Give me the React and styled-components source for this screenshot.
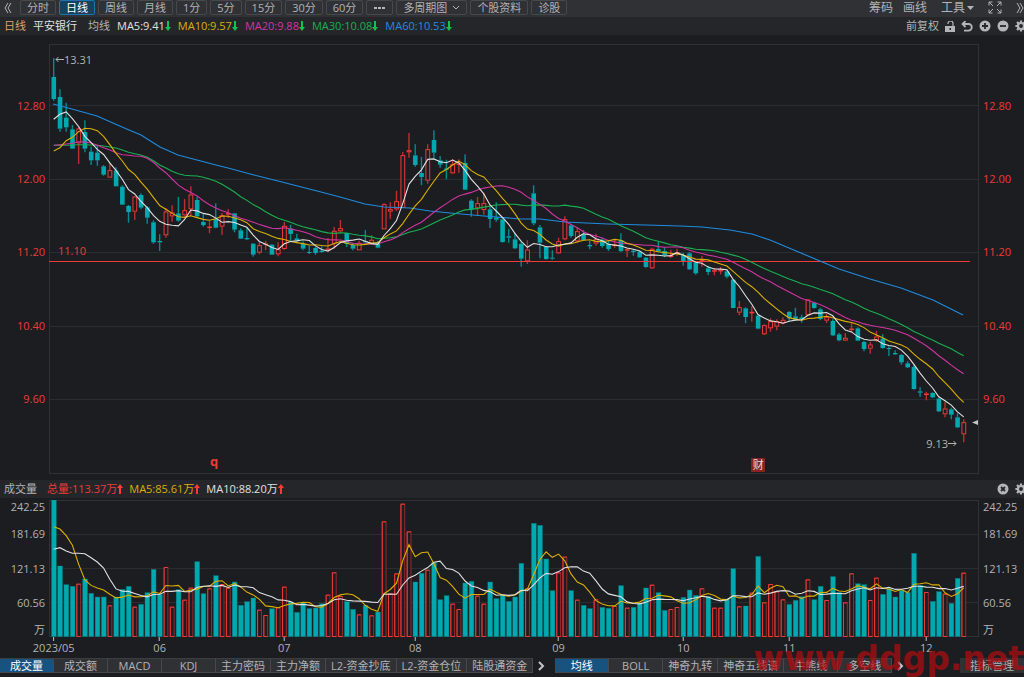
import styled, {createGlobalStyle, css} from "styled-components";

const colors = {
    bg: '#1c1d20',
    bar: '#25262a',
    tool: '#303135',
    line: '#303135',
    text: '#b2b3b5',
    up: '#ee3a38',
    upDim: '#97292b',
    down: '#00a8b0',
    downDim: '#04777d',
    white: '#e0e0e0',
    yellow: '#dcb000',
    pink: '#d034a2',
    green: '#18b050',
    blue: '#1e8ce0',
};

// side high top bottom low, three units to a pixel, base is added to every level
const candleGroups = [
    {
        base: 0,
        rows: `G 24 81 147 152,G 118 141 236 245,G 158 203 232 245,G 225 238 296 296,R 232 236 280 342,G 211 246 296 307,
        G 290 305 331 345,G 287 308 331 347,G 345 349 374 377,R 339 361 383 383,G 352 362 409 409,G 406 410 464 464,
        G 465 468 486 518,R 438 440 485 510,G 430 435 473 478,G 468 472 503 521,G 511 517 577 581,G 553 573 577 603,
        R 474 485 556 563,R 466 488 499 515,G 441 490 512 515,R 447 481 496 500,R 409 434 478 498,G 440 450 499 501,
        G 492 516 525 530,R 513 530 533 550,G 460 507 533 535,R 489 496 530 555,R 478 490 494 504,G 489 490 539 547,
        G 535 541 566 567,G 534 564 568 570,G 580 581 614 620,R 575 586 608 613,R 572 581 585 601,G 583 584 614 614,
        R 577 598 613 619`
    },
    {
        base: 210,
        rows: `R 306 318 387 389,G 314 326 342 364,G 341 355 362 365,G 364 371 386 391,G 377 396 399 402,G 380 384 399 404,
        G 379 392 396 398,R 354 386 389 393,R 321 333 371 386,R 300 325 334 338,G 339 339 372 381,G 369 375 386 391,
        R 362 369 391 391,G 330 363 367 371,R 346 360 371 372,G 362 366 383 385,R 250 253 328 328,R 247 268 275 297,
        R 212 244 268 273,R 96 106 264 264,R 39 91 97 113,G 73 106 135 140,G 111 159 171 196,R 73 88 182 191,
        G 31 60 98 114,G 108 121 134 143,G 119 145 149 178,R 117 133 160 161,R 118 131 135 158,G 103 129 209 210`
    },
    {
        base: 270,
        rows: `G 178 182 209 230,R 171 190 205 227,R 158 190 210 224,G 200 208 237 264,G 187 233 239 245,G 233 238 306 308,
        G 266 289 293 308,G 278 298 325 327,G 307 312 356 380,R 301 329 364 372,G 136 160 250 256,G 255 262 308 355,
        G 318 321 357 359,G 331 353 356 359,R 293 304 340 342,R 229 238 298 301,G 253 256 288 293,R 263 274 304 308,
        G 271 282 301 303,G 303 315 319 328,R 281 298 311 317,G 293 299 318 323,G 302 311 327 333,R 297 314 318 323,
        G 280 300 333 336,R 324 328 332 351,G 328 332 336 347,G 331 335 352 353,G 351 353 381 383,R 323 327 385 387,
        G 305 327 334 337,G 321 333 346 352,R 329 346 351 354,R 326 337 342 347,G 338 345 363 377,G 336 340 388 390,
        G 365 367 400 404`
    },
    {
        base: 510,
        rows: `R 108 120 124 140,G 137 145 156 165,R 144 151 154 166,R 141 150 153 163,G 150 154 170 175,G 178 179 264 265,
        R 243 262 278 286,G 262 265 291 310,R 259 276 279 305,G 284 287 326 328,R 313 316 343 345,R 295 304 325 335,
        R 298 304 320 331,R 292 300 310 313,G 273 276 295 303,G 263 289 299 301,G 284 292 297 308,R 238 239 286 287,
        G 245 248 264 266,G 263 268 297 301,R 282 291 302 309,G 298 303 346 348,G 338 343 361 364,R 339 354 362 363,
        R 306 326 329 337,G 322 325 362 363,G 362 366 387 394,R 366 374 386 401,R 333 350 361 366,G 343 356 384 386,
        G 379 384 387 408,G 391 399 403 405,G 402 405 427 434,G 424 430 442 444,G 434 441 507 509,G 502 514 518 530,
        R 515 521 525 541,G 517 519 532 534,G 533 536 574 576,R 546 566 583 592,G 563 568 584 598,G 580 592 622 624,
        R 598 607 643 667`
    },
];

const volumeTops = [
    60, 258, 314, 319, 311, 297, 340, 351, 351, 376, 351, 328, 319, 380, 373, 338, 268, 343, 261, 380, 329, 359, 323, 245,
    341, 325, 287, 312, 323, 306, 376, 365, 354, 389, 405, 386, 382, 320, 366, 397, 368, 386, 384, 371, 344, 277, 348, 365,
    388, 403, 376, 406, 396, 124, 341, 280, 71, 154, 306, 280, 269, 248, 359, 347, 371, 387, 309, 304, 347, 371, 306, 356,
    347, 364, 351, 250, 325, 130, 136, 237, 332, 277, 230, 332, 359, 376, 386, 358, 382, 385, 378, 317, 383, 382, 371, 324,
    314, 338, 391, 387, 381, 352, 330, 346, 325, 350, 383, 383, 357, 266, 379, 378, 338, 229, 367, 312, 334, 358, 373, 361,
    350, 298, 359, 319, 360, 290, 337, 367, 280, 311, 314, 360, 293, 343, 325, 351, 331, 337, 220, 316, 336, 364, 335, 341,
    370, 295, 278,
];

const candles = candleGroups.flatMap(({base, rows}) => rows.split(',').map((row) => {
    const [side, ...levels] = row.trim().split(' ');
    const [high, top, bottom, low] = levels.map((v) => 50 + (Number(v) + base) / 3);
    return {up: side === 'R', high, top, bottom, low, close: side === 'R' ? top : bottom};
}));

const xAt = (i) => 53.7 + i * 6.233;
const level = (list) => list.map((v) => 50 + v / 3);
const volLevel = (list) => list.map((v) => 480 + v / 3);

// seed holds the points that lack enough earlier days
const average = (values, n, seed) => values.map((_, i) => {
    if (i < seed.length) return seed[i];
    return values.slice(i - n + 1, i + 1).reduce((a, b) => a + b, 0) / n;
});
const toPoints = (values) => values.map((y, i) => `${xAt(i).toFixed(1)},${y.toFixed(1)}`).join(' ');

const volumes = volLevel(volumeTops);
const closes = candles.map((c) => c.close);
const priceLines = [
    {
        color: colors.blue,
        points: `53,104 72,109 97,116 129,130 141,135 160,147 178,155 216,165 228,168 254,175 278,181 321,192 340,197
        365,204 384,207 410,208 430,211 450,213 484,216 521,219 540,219 565,222 608,224 646,225 680,226 702,227 730,230
        752,234 770,240 789,248 820,261 839,269 870,279 901,288 933,300 963,315`
    },
    {
        color: colors.green,
        points: toPoints(average(closes, 30, level([286, 286, 286, 285, 284, 284, 285, 286, 288, 291, 294, 300, 307, 311,
            315, 322, 332, 345, 354, 364, 371, 376, 377, 378, 382, 387, 394, 403, 414])))
    },
    {
        color: colors.pink,
        points: toPoints(average(closes, 20, level([286, 284, 282, 280, 275, 276, 279, 286, 293, 300, 308, 314, 316, 318,
            319, 325, 337, 354, 368])))
    },
    {
        color: colors.yellow,
        points: toPoints(average(closes, 10, level([303, 293, 272, 262, 245, 235, 236, 242, 259])))
    },
    {color: colors.white, points: toPoints(average(closes, 5, level([208, 193, 186, 206])))},
];
const volumeLines = [
    {color: colors.yellow, points: toPoints(average(volumes, 5, volLevel([140, 147, 167, 196])))},
    {
        color: colors.white,
        points: toPoints(average(volumes, 10, volLevel([208, 203, 213, 220, 220, 221, 233, 246, 264])))
    },
];

const periods = ['分时', '日线', '周线', '月线', '1分', '5分', '15分', '30分', '60分'];
const averages = [
    {text: 'MA5:9.41', color: colors.white},
    {text: 'MA10:9.57', color: colors.yellow},
    {text: 'MA20:9.88', color: colors.pink},
    {text: 'MA30:10.08', color: colors.green},
    {text: 'MA60:10.53', color: colors.blue},
];
const volumeAverages = [
    {text: '总量:113.37万', color: colors.up},
    {text: 'MA5:85.61万', color: colors.yellow},
    {text: 'MA10:88.20万', color: colors.white},
];
const prices = ['12.80', '12.00', '11.20', '10.40', '9.60'];
const volumeTicks = ['242.25', '181.69', '121.13', '60.56', '万'];
const months = [['2023/05', 0], ['06', 17], ['07', 37], ['08', 58], ['09', 81], ['10', 101], ['11', 118], ['12', 140]];
const indicators = ['成交量', '成交额', 'MACD', 'KDJ', '主力密码', '主力净额', 'L2-资金抄底', 'L2-资金仓位', '陆股通资金'];
const overlays = ['均线', 'BOLL', '神奇九转', '神奇五线谱', '牛熊线', '多空线'];

const Chevrons = ({flip}) => (
    <svg width="8" height="12" viewBox="0 0 8 12" fill="none" stroke="#b2b3b5">
        <path d={flip ? 'M1 1l3 5-3 5M4 1l3 5-3 5' : 'M4 1L1 6l3 5M7 1L4 6l3 5'}/>
    </svg>
);
const Trend = ({up}) => (
    <svg width="6" height="10" viewBox="0 0 6 10" fill={up ? '#ff3a35' : '#14c24e'}>
        <path d={up ? 'M3 0l3 4H4v6H2V4H0z' : 'M2 0h2v6h2l-3 4-3-4h2z'}/>
    </svg>
);
const Gear = () => (
    <svg width="12" height="12" viewBox="0 0 12 12" fill="none" stroke="#b4b5b7">
        <circle cx="6" cy="6" r="3" strokeWidth="2.2"/>
        <path strokeWidth="2.2" d="M6 .4v2M6 9.6v2M.4 6h2M9.6 6h2M2 2l1.5 1.5M8.5 8.5L10 10M2 10l1.5-1.5M8.5 3.5L10 2"/>
    </svg>
);
const Round = ({path}) => (
    <svg width="12" height="12" viewBox="0 0 12 12">
        <circle cx="6" cy="6" r="5.5" fill="#b4b5b7"/>
        <path d={path} stroke="#25262a" strokeWidth="1.8"/>
    </svg>
);
const Next = ({color}) => (
    <svg width="7" height="10" viewBox="0 0 7 10" fill="none" stroke={color} strokeWidth="2">
        <path d="M1 1l4 4-4 4"/>
    </svg>
);

const Toolbar = () => (
    <StyledToolbar>
        <IconButton aria-label="收起"><Chevrons/></IconButton>
        <Periods>
            {periods.map((p) => <PeriodButton key={p} $active={p === '日线'}>{p}</PeriodButton>)}
            <PeriodButton aria-label="更多">
                <svg width="13" height="4" viewBox="0 0 13 4" fill="#b4b5b7">
                    <path d="M1 1h3v2H1zM5 1h3v2H5zM9 1h3v2H9z"/>
                </svg>
            </PeriodButton>
            <PeriodButton>
                多周期图
                <svg width="8" height="5" viewBox="0 0 8 5" fill="none" stroke="#b2b3b5"><path d="M1 1l3 3 3-3"/></svg>
            </PeriodButton>
            <PeriodButton>个股资料</PeriodButton>
            <PeriodButton>诊股</PeriodButton>
        </Periods>
        <Tools>
            <ToolButton>筹码</ToolButton>
            <ToolButton>画线</ToolButton>
            <ToolButton $wide>
                工具
                <svg width="7" height="4" viewBox="0 0 7 4" fill="#b2b3b5"><path d="M0 0h7L3.5 4z"/></svg>
            </ToolButton>
            <ToolButton $wide aria-label="全屏">
                <svg width="14" height="13" viewBox="0 0 14 13" fill="none" stroke="#b2b3b5">
                    <path d="M1 4.500V1h3.500M1 1l4 4M9.500 1H13v3.500M13 1L9 5M1 8.500V12h3.500M1 12l4-4M9.500 12H13V8.500M13 12L9 8"/>
                </svg>
            </ToolButton>
            <ToolButton $wide aria-label="展开"><Chevrons flip/></ToolButton>
        </Tools>
    </StyledToolbar>
);

const Legend = ({items, up}) => items.map(({text, color}) => (
    <LegendItem key={text} $color={color}>{text}<Trend up={up}/></LegendItem>
));

const PriceChart = () => (
    <PlotSvg $height={430} viewBox="49 44 930 430" preserveAspectRatio="none">
        <rect x="49.5" y="44.5" width="929" height="429" fill="none" stroke={colors.line}/>
        {[105, 179, 252, 326, 399].map((y) => <path key={y} d={`M50 ${y + .5}H978`} stroke="#2c2d31"/>)}
        {candles.map((c, i) => {
            const x = xAt(i);
            const h = Math.max(c.bottom - c.top, 1);
            return (
                <g key={i}>
                    <path d={`M${x} ${c.high}V${c.top}M${x} ${c.bottom}V${c.low}`} strokeWidth="1.4"
                          stroke={c.up ? '#b83032' : '#048a91'}/>
                    {c.up
                        ? <rect x={x - 1.8} y={c.top + .3} width="3.8" height={Math.max(h - .8, .6)} fill={colors.bg}
                                stroke={colors.up}/>
                        : <rect x={x - 2.2} y={c.top} width="4.6" height={h} fill={colors.down}/>}
                </g>
            );
        })}
        <path d="M49 261.500H970" stroke={colors.up}/>
        {priceLines.map((l) => (
            <polyline key={l.color} points={l.points} fill="none" stroke={l.color} strokeWidth="1.1"/>
        ))}
        <path d="M972 422.500l6-2.500v5z" fill="#c4c4c4"/>
    </PlotSvg>
);

const VolumeChart = () => (
    <PlotSvg $height={137} viewBox="49 500 930 137" preserveAspectRatio="none">
        <rect x="49.5" y="500.5" width="929" height="136" fill="none" stroke={colors.line}/>
        {[534, 568, 602].map((y) => <path key={y} d={`M50 ${y}.500H978`} stroke="#2c2d31"/>)}
        {volumes.map((top, i) => {
            const x = xAt(i);
            return candles[i].up
                ? <g key={i}>
                    <rect x={x - 1.8} y={top + .5} width="3.8" height={636 - top} fill={colors.bg} stroke={colors.upDim}/>
                    <path d={`M${x - 1.8} 636.500V${top + .5}H${x + 2}M${x - 1.8} 636.500H${x + 2}`} fill="none"
                          stroke={colors.up}/>
                </g>
                : <rect key={i} x={x - 2.2} y={top} width="4.8" height={636.6 - top} fill={colors.down}
                        stroke={colors.downDim} strokeWidth=".4"/>;
        })}
        {volumeLines.map((l) => (
            <polyline key={l.color} points={l.points} fill="none" stroke={l.color} strokeWidth="1.1"/>
        ))}
    </PlotSvg>
);

export default function App() {
    return (
        <Page>
            <GlobalStyle/>
            <Toolbar/>
            <InfoBar>
                <Name $color="#dca268">日线</Name>
                <Name $color="#e0e0e0">平安银行</Name>
                <Caption>均线</Caption>
                <Legend items={averages}/>
                <InfoTools>
                    <InfoButton>前复权</InfoButton>
                    <InfoButton aria-label="锁定">
                        <svg width="10" height="11" viewBox="0 0 10 11">
                            <path d="M3 3V2.500a2 2 0 0 1 5 0V5" fill="none" stroke="#b4b5b7" strokeWidth="1.2"/>
                            <path d="M0 5h10v6H0z" fill="#b4b5b7"/>
                            <path d="M4.500 7h1.500v2H4.500z" fill="#25262a"/>
                        </svg>
                    </InfoButton>
                    <InfoButton aria-label="撤销">
                        <svg width="12" height="11" viewBox="0 0 12 11" fill="none" stroke="#b4b5b7" strokeWidth="1.8">
                            <path d="M3 3h4.500a3.200 3.200 0 0 1 0 6.600H3"/>
                            <path d="M4.500 0L1.500 3l3 3"/>
                        </svg>
                    </InfoButton>
                    <InfoButton aria-label="放大"><Round path="M3 6h6M6 3v6"/></InfoButton>
                    <InfoButton aria-label="缩小"><Round path="M3 6h6"/></InfoButton>
                    <InfoButton aria-label="设置"><Gear/></InfoButton>
                </InfoTools>
            </InfoBar>

            <PricePane>
                <PriceScale $left>{prices.map((p) => <span key={p}>{p}</span>)}</PriceScale>
                <Plot>
                    <PriceChart/>
                    <Mark $x={6} $y={15}>
                        <svg width="9" height="7" viewBox="0 0 9 7" fill="none" stroke="#b2b3b5">
                            <path d="M9 3.500H1M3.500 1L1 3.500 3.500 6"/>
                        </svg>
                        13.31
                    </Mark>
                    <Mark $x={9} $y={206} $color={colors.up}>11.10</Mark>
                    <Mark $right={22} $y={399}>
                        9.13
                        <svg width="9" height="7" viewBox="0 0 9 7" fill="none" stroke="#b2b3b5">
                            <path d="M0 3.500h8M5.500 1L8 3.500 5.500 6"/>
                        </svg>
                    </Mark>
                    <Flag>q</Flag>
                    <Badge>财</Badge>
                </Plot>
                <PriceScale>{prices.map((p) => <span key={p}>{p}</span>)}</PriceScale>
            </PricePane>

            <InfoBar $tight>
                <Caption $first>成交量</Caption>
                <Legend items={volumeAverages} up/>
                <InfoTools>
                    <InfoButton aria-label="关闭"><Round path="M4 4l4 4M8 4l-4 4"/></InfoButton>
                    <InfoButton aria-label="设置"><Gear/></InfoButton>
                </InfoTools>
            </InfoBar>

            <VolumePane>
                <VolumeScale $left>{volumeTicks.map((v) => <span key={v}>{v}</span>)}</VolumeScale>
                <Plot>
                    <VolumeChart/>
                    {months.map(([label, i]) => (
                        <Month key={label} style={{left: `${(xAt(i) - 49) / 9.3}%`}}>{label}</Month>
                    ))}
                </Plot>
                <VolumeScale>{volumeTicks.map((v) => <span key={v}>{v}</span>)}</VolumeScale>
            </VolumePane>

            <Footer>
                <Tabs>{indicators.map((t, i) => <Tab key={t} $active={i === 0}>{t}</Tab>)}</Tabs>
                <IconButton aria-label="更多指标"><Next color="#c4c4c4"/></IconButton>
                <Tabs $second>{overlays.map((t, i) => <Tab key={t} $active={i === 0}>{t}</Tab>)}</Tabs>
                <IconButton aria-label="更多均线"><Next color="#c4c4c4"/></IconButton>
                <Manage>指标管理</Manage>
                <Watermark>www.ddgp.net</Watermark>
            </Footer>
        </Page>
    );
}

const GlobalStyle = createGlobalStyle`
  body {
    margin: 0;
    background: ${colors.bg};
  }

  button {
    font: inherit;
    color: inherit;
    padding: 0;
    border: 0;
    background: none;
    cursor: pointer;
    white-space: nowrap;
  }

  svg {
    display: block;
    flex: none;
  }
`;

const Page = styled.div`
  min-height: 100vh;
  overflow: hidden;
  background: ${colors.bg};
  color: ${colors.text};
  font-family: "Open Sans", "Noto Sans CJK SC", sans-serif;
  font-size: 11px;
  line-height: 14px;
`;

const StyledToolbar = styled.div`
  display: flex;
  align-items: flex-start;
  height: 17px;
  background: ${colors.tool};
`;

const IconButton = styled.button`
  display: flex;
  align-items: center;
  justify-content: center;
  width: 20px;
  height: 15px;
  padding-right: 4px;
  box-sizing: border-box;
`;

const Periods = styled.div`
  display: flex;
  gap: 3px;
`;

const PeriodButton = styled.button`
  display: flex;
  align-items: center;
  gap: 5px;
  height: 15px;
  padding: 0 6px;
  box-sizing: border-box;
  border: 1px solid #47484c;
  border-radius: 2px;

  ${({$active}) => $active && css`
    color: #fff;
    background: #18405f;
    border-color: #1c73ad;
  `}
`;

const Tools = styled.div`
  display: flex;
  gap: 10px;
  margin-left: auto;
  font-size: 12px;
`;

const ToolButton = styled.button`
  display: flex;
  align-items: center;
  gap: 2px;
  height: 15px;
  margin-left: ${({$wide}) => ($wide ? 4 : 0)}px;
`;

const InfoBar = styled.div`
  display: flex;
  align-items: center;
  gap: ${({$tight}) => ($tight ? 6 : 7)}px;
  height: 18px;
  padding-left: 4px;
  background: ${colors.bar};
  white-space: nowrap;
`;

const Name = styled.span`
  color: ${({$color}) => $color};
`;

const Caption = styled.span`
  margin-left: ${({$first}) => ($first ? 0 : 4)}px;
  margin-right: ${({$first}) => ($first ? 4 : 0)}px;
`;

const LegendItem = styled.span`
  display: flex;
  align-items: center;
  color: ${({$color}) => $color};
`;

const InfoTools = styled.div`
  display: flex;
  align-items: center;
  gap: 6px;
  margin-left: auto;
  margin-right: -3px;
`;

const InfoButton = styled.button`
  display: flex;
  align-items: center;
`;

const PricePane = styled.div`
  display: grid;
  grid-template-columns: 49px 1fr 45px;
  padding: 9px 0 6px;
`;

const VolumePane = styled.div`
  display: grid;
  grid-template-columns: 49px 1fr 45px;
  padding: 2px 0 20px;
`;

const Plot = styled.div`
  position: relative;
  min-width: 0;
`;

const PlotSvg = styled.svg`
  width: 100%;
  height: ${({$height}) => $height}px;
`;

const Scale = styled.div`
  display: grid;
  justify-items: ${({$left}) => ($left ? 'end' : 'start')};
  padding: 0 4px;
`;

const PriceScale = styled(Scale)`
  grid-auto-rows: 1fr;
  align-items: center;
  padding: 25px 4px 38px;
  color: ${colors.up};
`;

const VolumeScale = styled(Scale)`
  grid-template-rows: 1fr 2fr 2fr 2fr 1fr;
  align-items: center;

  span:first-child {
    align-self: start;
  }

  span:last-child {
    align-self: end;
  }
`;

const Mark = styled.span`
  position: absolute;
  top: ${({$y}) => $y}px;
  ${({$x, $right}) => ($right ? `right: ${$right}px;` : `left: ${$x}px;`)}
  display: flex;
  align-items: center;
  line-height: 1;
  height: 0;
  color: ${({$color}) => $color || colors.text};
`;

const Flag = styled.span`
  position: absolute;
  left: 17.3%;
  bottom: 6px;
  font-size: 13px;
  font-weight: 700;
  color: ${colors.up};
`;

const Badge = styled.span`
  position: absolute;
  left: 75.5%;
  bottom: 2px;
  width: 14px;
  height: 14px;
  border-radius: 1px;
  text-align: center;
  color: #f0d8d8;
  background: #842426;
`;

const Month = styled.span`
  position: absolute;
  top: 137px;
  transform: translateX(-50%);

  &::before {
    content: "";
    display: block;
    width: 1px;
    height: 4px;
    margin: 0 auto;
    background: #c4c4c4;
  }
`;

const Footer = styled.div`
  position: relative;
  display: flex;
  height: 20px;
  padding-top: 1px;
  box-sizing: border-box;
`;

const Tabs = styled.div`
  display: flex;
  height: 15px;
  margin-left: ${({$second}) => ($second ? 2 : 0)}px;
  border-bottom: 1px solid #47484c;
  box-sizing: border-box;
`;

const Tab = styled.button`
  min-width: 54px;
  padding: 0 5px;
  box-sizing: border-box;
  border-top: 1px solid #3c3d41;
  border-right: 1px solid #47484c;
  line-height: 13px;
  background: ${({$active}) => ($active ? '#18527f' : colors.tool)};
  color: ${({$active}) => ($active ? '#fff' : colors.text)};
`;

const Manage = styled.button`
  height: 15px;
  margin-left: auto;
  padding: 0 10px;
  background: ${colors.tool};
`;

const Watermark = styled.span`
  position: absolute;
  right: 0;
  top: -18px;
  font: 700 33px/40px "DejaVu Sans", sans-serif;
  color: #b40c10;
  opacity: .7;
  pointer-events: none;
`;
